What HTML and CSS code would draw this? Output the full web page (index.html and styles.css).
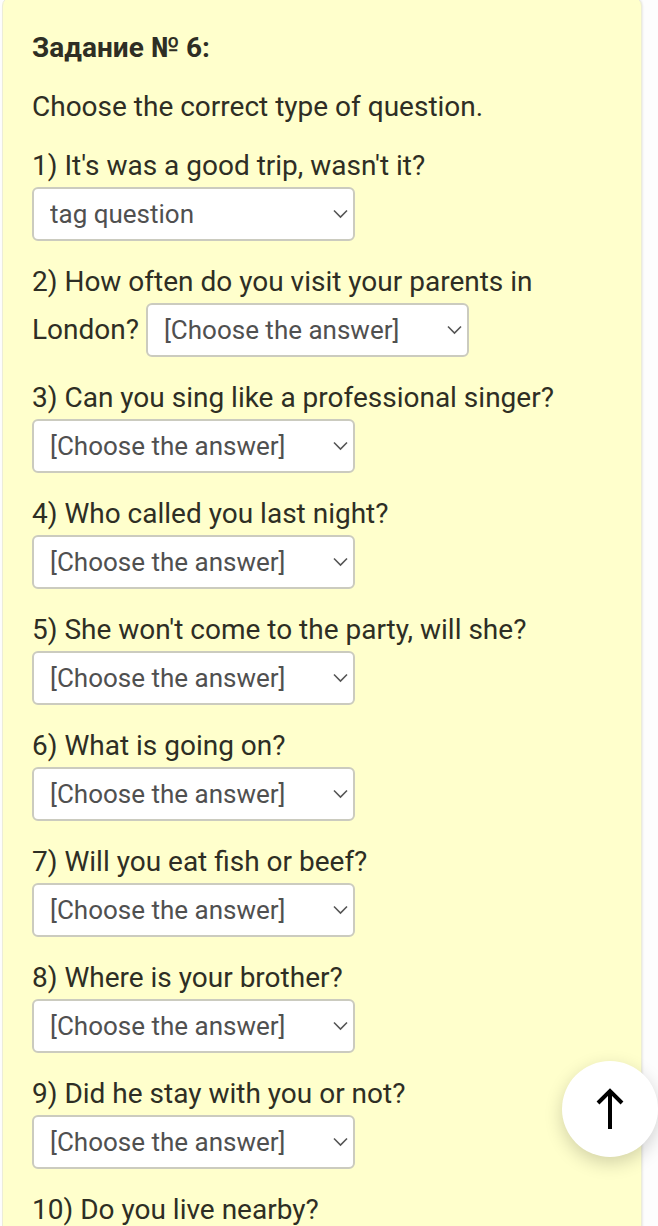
FILE: index.html
```html
<!DOCTYPE html>
<html lang="ru">
<head>
  <meta charset="UTF-8" />
  <meta name="viewport" content="width=device-width, initial-scale=1.0"/>
  <title>Задание № 6</title>
  <link rel="stylesheet" href="styles.css">
</head>
<body>
  <div class="task">
    <p class="title">Задание № 6:</p>
    <p>Choose the correct type of question.</p>

    <p>1) It's was a good trip, wasn't it?
      <span class="pick"><select><option>tag question</option></select><svg class="chev" viewBox="0 0 16 10"><path d="M1.5 1.5 8 8l6.5-6.5"/></svg></span>
    </p>
    <p>2) How often do you visit your parents in London?
      <span class="pick"><select><option>[Choose the answer]</option></select><svg class="chev" viewBox="0 0 16 10"><path d="M1.5 1.5 8 8l6.5-6.5"/></svg></span>
    </p>
    <p>3) Can you sing like a professional singer?
      <span class="pick"><select><option>[Choose the answer]</option></select><svg class="chev" viewBox="0 0 16 10"><path d="M1.5 1.5 8 8l6.5-6.5"/></svg></span>
    </p>
    <p>4) Who called you last night?
      <span class="pick"><select><option>[Choose the answer]</option></select><svg class="chev" viewBox="0 0 16 10"><path d="M1.5 1.5 8 8l6.5-6.5"/></svg></span>
    </p>
    <p>5) She won't come to the party, will she?
      <span class="pick"><select><option>[Choose the answer]</option></select><svg class="chev" viewBox="0 0 16 10"><path d="M1.5 1.5 8 8l6.5-6.5"/></svg></span>
    </p>
    <p>6) What is going on?
      <span class="pick"><select><option>[Choose the answer]</option></select><svg class="chev" viewBox="0 0 16 10"><path d="M1.5 1.5 8 8l6.5-6.5"/></svg></span>
    </p>
    <p>7) Will you eat fish or beef?
      <span class="pick"><select><option>[Choose the answer]</option></select><svg class="chev" viewBox="0 0 16 10"><path d="M1.5 1.5 8 8l6.5-6.5"/></svg></span>
    </p>
    <p>8) Where is your brother?
      <span class="pick"><select><option>[Choose the answer]</option></select><svg class="chev" viewBox="0 0 16 10"><path d="M1.5 1.5 8 8l6.5-6.5"/></svg></span>
    </p>
    <p>9) Did he stay with you or not?
      <span class="pick"><select><option>[Choose the answer]</option></select><svg class="chev" viewBox="0 0 16 10"><path d="M1.5 1.5 8 8l6.5-6.5"/></svg></span>
    </p>
    <p>10) Do you live nearby?
      <span class="pick"><select><option>[Choose the answer]</option></select><svg class="chev" viewBox="0 0 16 10"><path d="M1.5 1.5 8 8l6.5-6.5"/></svg></span>
    </p>
  </div>

  <button class="to-top" aria-label="Наверх">
    <svg viewBox="0 0 28 42"><path d="M14 41V3M2 15 14 3l12 12"/></svg>
  </button>
</body>
</html>
```

FILE: styles.css
```css
body {
  margin: 0;
  background: #fdfdfd;
  font-family: Roboto, 'Noto Sans', sans-serif;
  color: #2e2e24;
}
.task {
  width: 560px;
  margin: -4px 0 0 2px;
  padding: 33px 49px 30px 29px;
  background: #ffffcc;
  border: 1px solid #ececd8;
  border-radius: 10px;
  box-shadow: 1px 0 2px rgba(0, 0, 0, 0.08);
  font-size: 28px;
  line-height: 36px;
}
.task p {
  margin: 0 0 23px;
}
.title {
  font-weight: bold;
}
.pick {
  position: relative;
  display: inline-block;
  margin-top: 3px;
}
.pick select {
  -webkit-appearance: none;
  appearance: none;
  width: 323px;
  height: 54px;
  padding: 0 40px 0 16px;
  border: 2px solid #cbcbbf;
  border-radius: 6px;
  background: #fff;
  font-family: inherit;
  font-size: 26px;
  color: #505050;
}
.chev {
  position: absolute;
  right: 6px;
  top: 22px;
  width: 17px;
  height: 10px;
  fill: none;
  stroke: #555;
  stroke-width: 1.6;
  pointer-events: none;
}
.to-top {
  position: fixed;
  left: 562px;
  top: 1061px;
  width: 96px;
  height: 96px;
  padding: 0;
  border: none;
  border-radius: 50%;
  background: #fff;
  box-shadow: 0 6px 18px rgba(0, 0, 0, 0.18);
  display: flex;
  align-items: center;
  justify-content: center;
  cursor: pointer;
}
.to-top svg {
  width: 28px;
  height: 42px;
  fill: none;
  stroke: #000;
  stroke-width: 4;
}
```
